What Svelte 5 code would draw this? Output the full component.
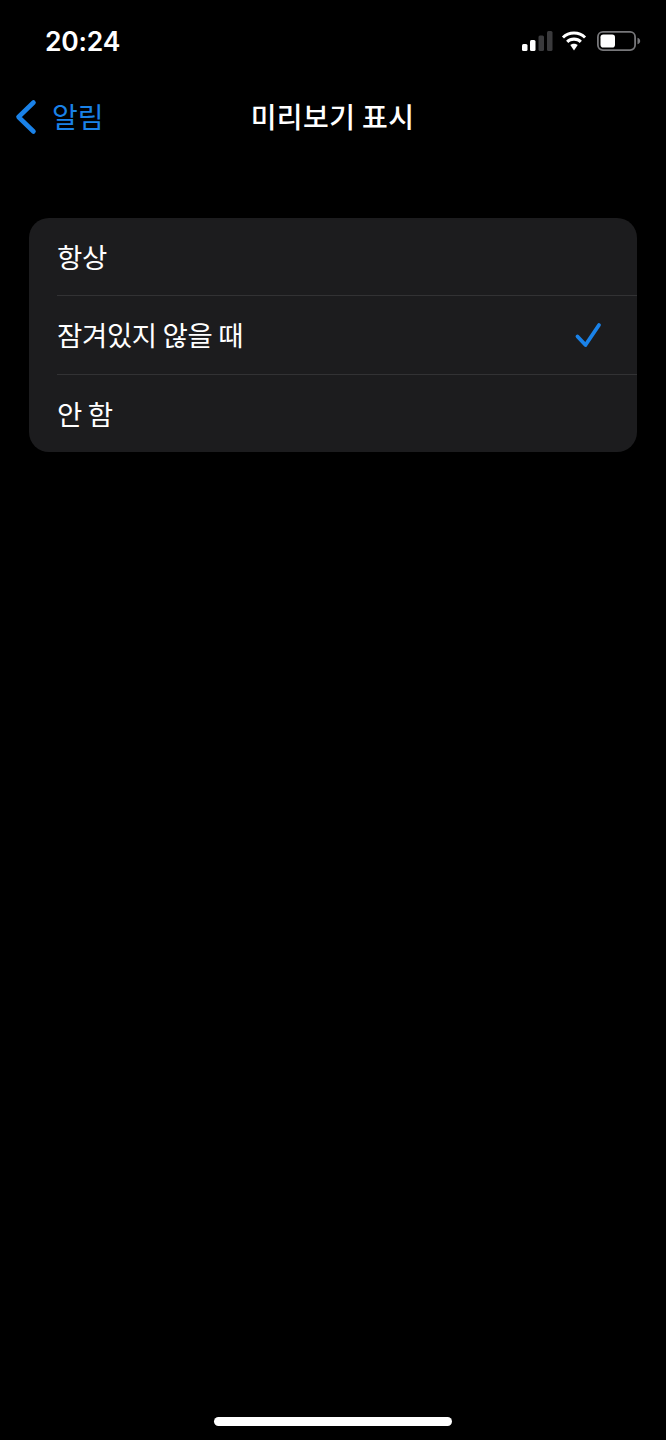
<script>
  const rows = [
    { label: '항상', checked: false },
    { label: '잠겨있지 않을 때', checked: true },
    { label: '안 함', checked: false }
  ];
</script>

<div class="screen">
  <header class="status">
    <span class="time">20:24</span>
    <div class="icons">
      <svg class="signal" width="31" height="20" viewBox="0 0 31 20" aria-hidden="true">
        <rect x="0" y="13" width="5.5" height="7" rx="1.5" fill="#fff"/>
        <rect x="8" y="9" width="5.5" height="11" rx="1.5" fill="#fff"/>
        <rect x="16.5" y="4.5" width="5.5" height="15.5" rx="1.5" fill="#3a3a3c"/>
        <rect x="25" y="0" width="5.5" height="20" rx="1.5" fill="#3a3a3c"/>
      </svg>
      <svg class="wifi" width="28" height="20" viewBox="0 0 28 20" aria-hidden="true">
        <path d="M14 3.6c3.9 0 7.4 1.5 10 4l2.1-2.2C23 2.2 18.700.6 14 .6S5 2.200 1.900 5.400L4 7.600c2.600-2.500 6.100-4 10-4z" fill="#fff"/>
        <path d="M14 9.800c2.200 0 4.200.8 5.700 2.200l2.200-2.200C19.800 7.800 17 6.600 14 6.600s-5.800 1.200-7.900 3.200L8.300 12c1.500-1.400 3.500-2.200 5.700-2.200z" fill="#fff"/>
        <path d="M14 12.700c-1.700 0-2.900.6-3.700 1.400L14 19.400l3.700-5.300c-.8-.8-2-1.400-3.700-1.400z" fill="#fff"/>
      </svg>
      <svg class="battery" width="44" height="20" viewBox="0 0 44 20" aria-hidden="true">
        <rect x="0.900" y="0.900" width="37.200" height="18.200" rx="5" fill="none" stroke="#77777a" stroke-width="1.800"/>
        <rect x="3.500" y="3.500" width="14.500" height="13" rx="2.800" fill="#fff"/>
        <path d="M40.500 6.800v6.400c1.700-.5 2.700-1.800 2.700-3.200s-1-2.700-2.700-3.200z" fill="#77777a"/>
      </svg>
    </div>
  </header>

  <nav class="nav">
    <div class="back">
      <svg class="chevron" width="22" height="36" viewBox="0 0 22 36" aria-hidden="true">
        <path d="M18.500 3.500 3.500 18l15 14.500" fill="none" stroke="#1a82e8" stroke-width="4.600" stroke-linecap="round" stroke-linejoin="round"/>
      </svg>
      <span>알림</span>
    </div>
    <h1>미리보기 표시</h1>
  </nav>

  <ul class="card">
    {#each rows as row}
      <li class="row">
        <span class="label">{row.label}</span>
        {#if row.checked}
          <svg class="check" width="28" height="30" viewBox="0 0 28 30" aria-hidden="true">
            <path d="M3.500 16.500 11.500 25 25 5" fill="none" stroke="#1a82e8" stroke-width="3.800" stroke-linecap="round" stroke-linejoin="round"/>
          </svg>
        {/if}
      </li>
    {/each}
  </ul>

  <div class="spacer"></div>
  <div class="home"></div>
</div>

<style>
  :global(body) {
    margin: 0;
    background: #000;
  }
  .screen {
    display: flex;
    flex-direction: column;
    width: 666px;
    height: 1440px;
    background: #000;
    color: #fff;
    font-family: Inter, "Noto Sans CJK KR", sans-serif;
    overflow: hidden;
  }
  .status {
    display: flex;
    justify-content: space-between;
    align-items: center;
    height: 42px;
    padding: 20px 25px 0 45px;
  }
  .time {
    font-family: Inter, sans-serif;
    font-size: 26.5px;
    font-weight: 600;
    line-height: 42px;
    letter-spacing: -0.2px;
  }
  .icons {
    display: flex;
    align-items: center;
  }
  .signal { margin-right: 7.5px; }
  .wifi { margin-right: 9px; }
  .nav {
    display: grid;
    grid-template-columns: 1fr auto 1fr;
    align-items: center;
    height: 44px;
    margin-top: 32px;
    padding: 0 16px 0 15px;
  }
  .back {
    display: flex;
    align-items: center;
    gap: 15px;
    color: #1a82e8;
    font-size: 28px;
    font-family: "Noto Sans CJK KR", sans-serif;
    line-height: 44px;
  }
  .chevron { margin-top: 2px; }
  .back span {
    letter-spacing: -0.1px;
  }
  h1 {
    margin: 0;
    font-family: "Noto Sans CJK KR", sans-serif;
    font-size: 28px;
    font-weight: 500;
    line-height: 44px;
    letter-spacing: 0.4px;
  }
  .card {
    list-style: none;
    margin: 80px 29px 0;
    padding: 0 0 0 28px;
    background: #1c1c1e;
    border-radius: 20px;
  }
  .row {
    display: flex;
    justify-content: space-between;
    align-items: center;
    height: 78px;
    padding-right: 35px;
    box-sizing: border-box;
    border-bottom: 1px solid #323234;
  }
  .row:nth-child(2) {
    height: 79px;
  }
  .row:last-child {
    height: 77px;
    border-bottom: none;
  }
  .label {
    margin-bottom: 2px;
    font-family: "Noto Sans CJK KR", sans-serif;
    font-size: 27.5px;
    line-height: 40px;
    letter-spacing: -0.35px;
  }
  .spacer { flex: 1; }
  .home {
    width: 238px;
    height: 9px;
    margin: 0 auto 14px;
    background: #fff;
    border-radius: 5px;
  }
</style>
